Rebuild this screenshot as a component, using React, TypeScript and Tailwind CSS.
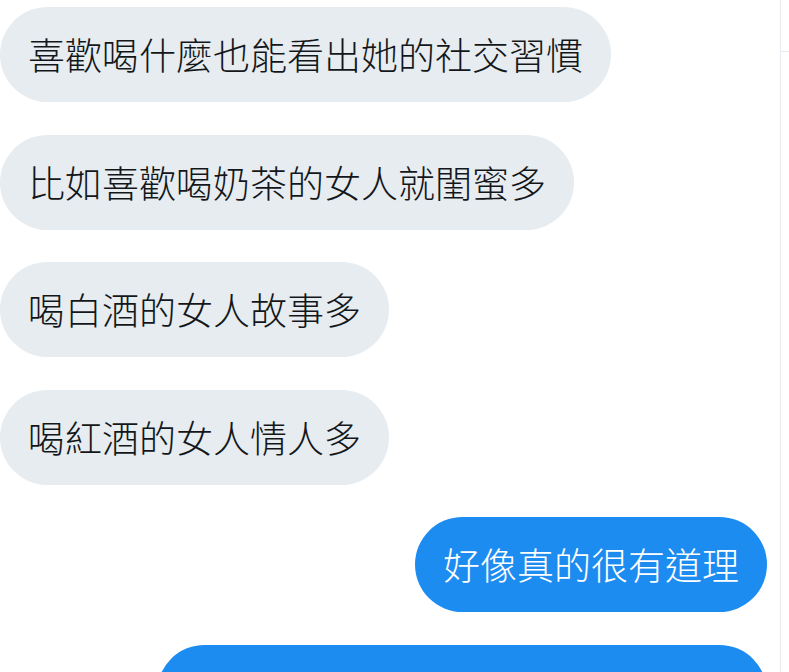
import React from "react";

const received = [
  "喜歡喝什麼也能看出她的社交習慣",
  "比如喜歡喝奶茶的女人就閨蜜多",
  "喝白酒的女人故事多",
  "喝紅酒的女人情人多",
];

function Bubble({ text, mine }: { text: string; mine?: boolean }) {
  return (
    <div className={`flex ${mine ? "justify-end pr-[13px]" : "justify-start"}`}>
      <div
        className={`h-[95px] flex items-center px-[28px] rounded-full text-[37px] leading-none font-light whitespace-nowrap ${
          mine ? "bg-[#1d8cf1] text-white" : "bg-[#e6ecf0] text-[#14171a]"
        }`}
      >
        {text}
      </div>
    </div>
  );
}

export default function App() {
  return (
    <div
      className="w-[789px] h-[672px] overflow-hidden bg-white flex"
      style={{ fontFamily: '"Noto Sans CJK TC", "Noto Sans CJK SC", sans-serif' }}
    >
      <div className="w-[781px] shrink-0 border-r border-[#e6ecf0] flex flex-col gap-[32.6px] pt-[7px]">
        {received.map((t) => (
          <Bubble key={t} text={t} />
        ))}
        <Bubble text="好像真的很有道理" mine />
        {/* next message, its text is below the fold */}
        <div className="flex justify-end pr-[13px]">
          <div className="h-[95px] w-[610px] rounded-full bg-[#1d8cf1]" />
        </div>
      </div>
      <div className="flex-1">
        <div className="h-[52px] border-b border-[#e6ecf0]" />
      </div>
    </div>
  );
}
